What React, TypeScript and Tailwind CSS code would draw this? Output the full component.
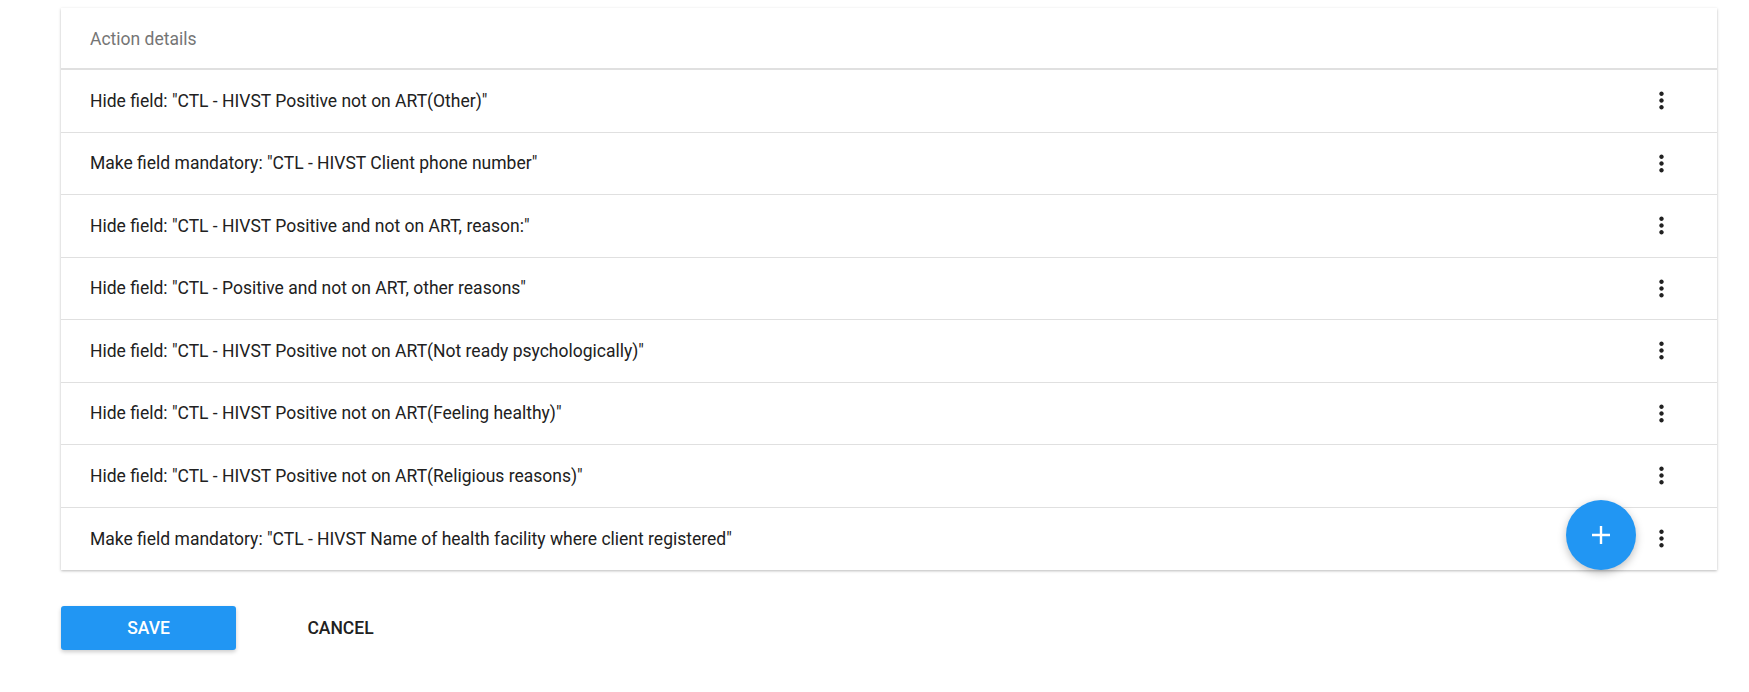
const actions = [
  'Hide field: "CTL - HIVST Positive not on ART(Other)"',
  'Make field mandatory: "CTL - HIVST Client phone number"',
  'Hide field: "CTL - HIVST Positive and not on ART, reason:"',
  'Hide field: "CTL - Positive and not on ART, other reasons"',
  'Hide field: "CTL - HIVST Positive not on ART(Not ready psychologically)"',
  'Hide field: "CTL - HIVST Positive not on ART(Feeling healthy)"',
  'Hide field: "CTL - HIVST Positive not on ART(Religious reasons)"',
  'Make field mandatory: "CTL - HIVST Name of health facility where client registered"',
];

function MoreVert() {
  return (
    <svg viewBox="0 0 24 24" width={27} height={27} fill="#212121">
      <path d="M12 8c1.1 0 2-.9 2-2s-.9-2-2-2-2 .9-2 2 .9 2 2 2zm0 2c-1.1 0-2 .9-2 2s.9 2 2 2 2-.9 2-2-.9-2-2-2zm0 6c-1.1 0-2 .9-2 2s.9 2 2 2 2-.9 2-2-.9-2-2-2z" />
    </svg>
  );
}

export default function App() {
  return (
    <div className="min-h-[692px] w-[1749px] bg-white font-['Roboto',sans-serif] pl-[61px] pr-[32px] pt-[8px]">
      {/* action list card */}
      <div className="relative bg-white shadow-[0_1px_3px_rgba(0,0,0,0.18),0_1px_2px_rgba(0,0,0,0.1)]">
        <div className="h-[62px] flex items-center pt-[2px] pl-[29px] border-b-2 border-[#e0e0e0] text-[17.5px] text-[#757575]">
          Action details
        </div>
        {actions.map((text, i) => (
          <div
            key={i}
            className={`h-[62.5px] flex items-center pl-[29px] pr-[42px] text-[17.5px] text-[#212121] ${
              i < actions.length - 1 ? "border-b border-[#e0e0e0]" : ""
            }`}
          >
            <span className="flex-1">{text}</span>
            <MoreVert />
          </div>
        ))}
        <button className="absolute right-[81px] bottom-0 w-[70px] h-[70px] rounded-full bg-[#2196f3] flex items-center justify-center shadow-[0_3px_8px_rgba(0,0,0,0.25)]">
          <svg viewBox="0 0 20 20" width={20} height={20}>
            <path d="M10 1v18M1 10h18" stroke="white" strokeWidth={2.4} />
          </svg>
        </button>
      </div>

      <div className="flex items-center gap-[17px] mt-[36px]">
        <button className="w-[175px] h-[44px] rounded-[3px] bg-[#2196f3] text-white text-[17.5px] font-medium shadow-[0_2px_4px_rgba(0,0,0,0.2)]">
          SAVE
        </button>
        <button className="w-[175px] h-[44px] text-[#212121] text-[17.5px] font-medium">
          CANCEL
        </button>
      </div>
    </div>
  );
}
